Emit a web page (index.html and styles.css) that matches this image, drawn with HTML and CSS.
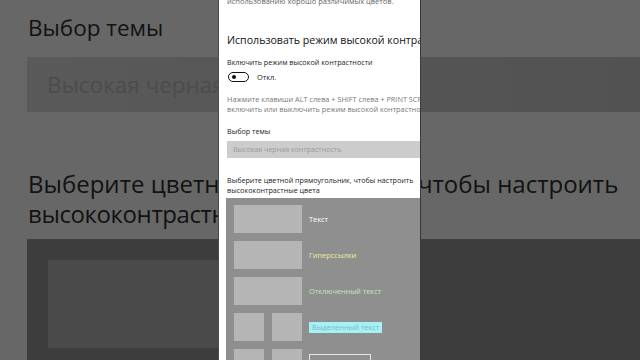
FILE: index.html
```html
<!DOCTYPE html>
<html lang="ru">
<head>
<meta charset="utf-8">
<link rel="stylesheet" href="styles.css">
</head>
<body>
<div class="stage">
  <div class="backdrop">
    <div class="bd-title">Выбор темы</div>
    <div class="bd-select"><span>Высокая черная контрастность</span></div>
    <div class="bd-desc">Выберите цветно<span class="squeeze">й прямоугольник, </span>чтобы настроить<br><span class="tight">высококонтрастные</span> цвета</div>
    <div class="bd-preview"><div class="bd-rect"></div></div>
  </div>

  <div class="panel">
    <p class="cut">использованию хорошо различимых цветов.</p>
    <h2 class="heading">Использовать режим высокой контрастности</h2>
    <p class="label">Включить режим высокой контрастности</p>
    <div class="toggle-row">
      <span class="toggle"><span class="knob"></span></span>
      <span class="toggle-text">Откл.</span>
    </div>
    <p class="hint">Нажмите клавиши ALT слева + SHIFT слева + PRINT SCREEN, чтобы<br>включить или выключить режим высокой контрастности.</p>
    <p class="label theme-label">Выбор темы</p>
    <div class="select">Высокая черная контрастность</div>
    <p class="label desc">Выберите цветной прямоугольник, чтобы настроить<br>высококонтрастные цвета</p>
    <div class="preview">
      <div class="row"><div class="swatch"></div><span class="pv-text c-text">Текст</span></div>
      <div class="row"><div class="swatch"></div><span class="pv-text c-link">Гиперссылки</span></div>
      <div class="row"><div class="swatch"></div><span class="pv-text c-dis">Отключенный текст</span></div>
      <div class="row"><div class="pair"><div class="sq"></div><div class="sq"></div></div><span class="pv-text c-sel">Выделенный текст</span></div>
      <div class="row"><div class="pair"><div class="sq"></div><div class="sq"></div></div><span class="btn-outline"></span></div>
    </div>
  </div>
</div>
</body>
</html>
```
FILE: styles.css
```css
* { box-sizing: border-box; }
html, body { margin: 0; padding: 0; }
body {
  width: 640px;
  height: 360px;
  overflow: hidden;
  font-family: "Open Sans", "Noto Sans", sans-serif;
}
.stage {
  position: relative;
  width: 640px;
  height: 360px;
  background: #676767;
  overflow: hidden;
}

/* enlarged dimmed copy behind */
.backdrop {
  width: 640px;
  height: 360px;
  padding: 14px 0 0 27px;
  color: #121212;
  display: flex;
  flex-direction: column;
}
.bd-title {
  font-size: 22.5px;
  line-height: 28px;
  padding-left: 1px;
}
.bd-select {
  margin-top: 15px;
  height: 55px;
  background: linear-gradient(90deg, #5a5a5a, #525252);
  display: flex;
  align-items: center;
  padding-left: 20px;
  font-size: 22.5px;
  color: #4c4c4c;
  white-space: nowrap;
}
.bd-desc {
  margin-top: 57px;
  font-size: 24px;
  line-height: 30px;
  padding-left: 1px;
  white-space: nowrap;
}
.squeeze { letter-spacing: -1.9px; }
.tight { letter-spacing: -0.4px; }
.bd-preview {
  margin-top: 10px;
  flex: 1;
  background: #3d3d3d;
  padding: 21px 0 0 21px;
}
.bd-rect {
  width: 210px;
  height: 88px;
  background: #4a4a4a;
}

/* settings panel overlay */
.panel {
  position: absolute;
  top: 0;
  left: 218px;
  width: 203px;
  height: 360px;
  background: #fff;
  border-left: 1px solid #4c4c4c;
  border-right: 1px solid #3a3a3a;
  padding-left: 8px;
  overflow: hidden;
  white-space: nowrap;
  color: #1a1a1a;
}
p, h2 { margin: 0; font-weight: normal; }
.cut {
  margin-top: -4px;
  font-size: 7.5px;
  line-height: 11px;
  color: #666;
}
.heading {
  margin-top: 26px;
  font-size: 10.6px;
  line-height: 14px;
  color: #111;
}
.label {
  font-size: 7.2px;
  line-height: 10px;
  color: #222;
}
.heading + .label { margin-top: 10px; }
.toggle-row {
  margin-top: 5px;
  display: flex;
  align-items: center;
  height: 10px;
  padding-left: 1px;
}
.toggle {
  width: 21px;
  height: 10px;
  border: 1.3px solid #111;
  border-radius: 5px;
  display: flex;
  align-items: center;
  padding-left: 2.5px;
}
.knob {
  width: 4px;
  height: 4px;
  border-radius: 50%;
  background: #111;
}
.toggle-text {
  margin-left: 8px;
  font-size: 7.4px;
  color: #222;
}
.hint {
  margin-top: 12px;
  font-size: 7.3px;
  line-height: 10px;
  color: #777;
}
.theme-label { margin-top: 12px; }
.select {
  margin-top: 5px;
  height: 17px;
  background: #cccccc;
  padding-left: 6px;
  font-size: 7.1px;
  line-height: 17px;
  color: #9a9a9a;
}
.desc { margin-top: 17px; }
.preview {
  margin-top: 3px;
  margin-left: -1px;
  height: 170px;
  background: #8f8f8f;
  padding: 7px 0 0 8px;
  display: flex;
  flex-direction: column;
  gap: 8px;
}
.row {
  display: flex;
  align-items: center;
  gap: 7px;
  height: 28px;
  flex: none;
}
.swatch {
  width: 68px;
  height: 28px;
  background: #b5b5b5;
}
.pair {
  width: 68px;
  height: 28px;
  display: flex;
  justify-content: space-between;
}
.sq {
  width: 30px;
  height: 28px;
  background: #b5b5b5;
}
.pv-text { font-size: 7.4px; line-height: 11px; }
.c-text { color: #ffffff; }
.c-link { color: #f2eaa0; }
.c-dis { color: #c8e6c0; }
.c-sel {
  background: #a4f2f6;
  color: #7fb8c4;
  padding: 0 3px;
}
.btn-outline {
  width: 62px;
  height: 16px;
  border: 1px solid #e6e6e6;
  align-self: flex-start;
  margin-top: 5px;
}
```
